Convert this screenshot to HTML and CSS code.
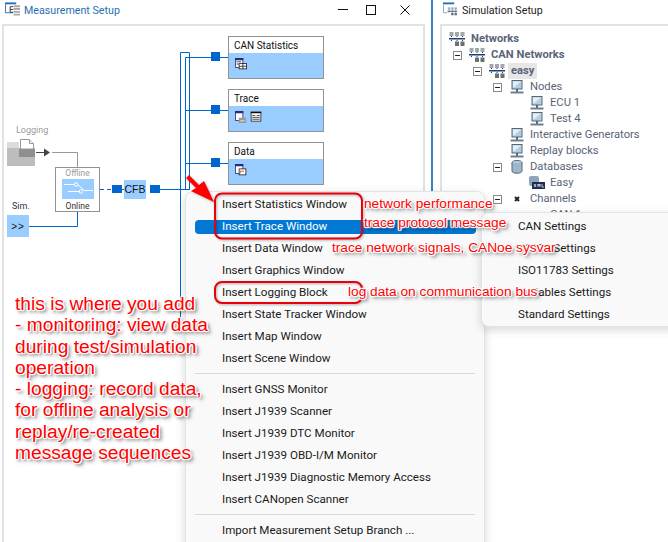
FILE: index.html
```html
<!DOCTYPE html>
<html lang="en">
<head>
<meta charset="utf-8">
<title>Measurement Setup</title>
<link rel="stylesheet" href="styles.css">
</head>
<body>
<svg class="defs" width="0" height="0" aria-hidden="true">
  <symbol id="net" viewBox="0 0 16 14">
    <rect class="nt" x="0.500" y="0" width="4" height="4"/><rect class="nt" x="6" y="0" width="4" height="4"/><rect class="nt" x="11.500" y="0" width="4" height="4"/>
    <path d="M2.500 4v5M8 4v5M13.500 4v5" stroke="#1d3f78" stroke-width="1" stroke-dasharray="1 1" fill="none"/>
    <rect x="0" y="6" width="16" height="1.500" fill="#1d3f78"/>
    <rect class="nb" x="6" y="9.500" width="4" height="4.500"/><rect class="nb" x="11.500" y="9.500" width="4" height="4.500"/>
  </symbol>
  <symbol id="node" viewBox="0 0 16 14">
    <rect x="3" y="0.500" width="10" height="8.500" fill="#b5cfe2" stroke="#56667a"/>
    <path d="M4 1.500 L12 1.500 L4 8z" fill="#e4eff7"/>
    <path d="M8 9v3" stroke="#56667a" stroke-width="2"/>
    <rect x="1.500" y="11.500" width="13" height="2" fill="#6f7f8f"/>
  </symbol>
</svg>
<div class="app">
  <section class="left">
    <header class="title">
      <svg class="title-icon" viewBox="0 0 16 14"><rect x="0" y="0" width="12" height="2" fill="#1f6fc0"/><path d="M0.500 2v9h8" fill="none" stroke="#3a6ea5"/><path d="M5.500 4.500h3M5.500 4.500v6h3M5.500 7.500h3" fill="none" stroke="#333"/><path d="M9 4h7M9 7h7M9 10h7M9 13h7" stroke="#a9a9a9" stroke-width="2"/></svg>
      <span class="title-text active">Measurement Setup</span>
      <div class="win-controls">
        <svg class="ctl" viewBox="0 0 10 10"><path d="M0 4.500h10" stroke="#111" fill="none"/></svg>
        <svg class="ctl" viewBox="0 0 10 10"><rect x="0.500" y="0.500" width="9" height="9" stroke="#111" fill="none"/></svg>
        <svg class="ctl" viewBox="0 0 10 10"><path d="M0.500 0.500l9 9M9.500 0.500l-9 9" stroke="#111" fill="none"/></svg>
      </div>
    </header>
    <div class="canvas">
      <div class="diagram">
        <svg class="wires" width="440" height="542" viewBox="0 0 440 542">
          <path class="wire" d="M180.500 320V52.500H189.500V190M185.500 190V57.500H228M185.500 110.500H228M185.500 163.500H228"/>
          <path class="wire" d="M122 189.500H124M160 189.500H190"/>
          <path class="wire" d="M29 226.500H77.500V212"/>
          <path class="wire dash" d="M100 189.500H112"/>
          <path class="wire-g" d="M52 152.500H77.500V167"/>
          <path d="M36 152.500H44" stroke="#444" fill="none"/><path d="M44 148.500l6 4-6 4z" fill="#444"/>
          <rect class="port" x="211" y="52" width="9" height="9"/>
          <rect class="port" x="211" y="105" width="9" height="9"/>
          <rect class="port" x="211" y="158" width="9" height="9"/>
          <rect class="port" x="112" y="185" width="10" height="8"/>
          <rect class="port" x="150" y="185" width="10" height="8"/>
          <rect x="7" y="142" width="12" height="6" fill="#dcdcdc"/>
          <rect x="7" y="148" width="28" height="18" fill="#bdbdbd"/>
          <rect x="19" y="149" width="16" height="8" fill="#8f8f8f"/>
          <path d="M20.500 139.500h9l4 4v5.500h-13z" fill="#fff" stroke="#999"/>
          <path d="M29.500 139.500v4h4" fill="#eee" stroke="#999"/>
        </svg>

        <div class="block b1"><div class="block-head">CAN Statistics</div><div class="block-body">
          <svg class="blk-icon" viewBox="0 0 16 16"><rect x="0.500" y="0.500" width="10" height="12" fill="#fff" stroke="#1f1f5f"/><rect width="11" height="3" fill="#2b2b7a"/><path d="M2 5h6M2 8h3" stroke="#111"/><rect x="5.500" y="7.500" width="10" height="7" fill="#fff" stroke="#111"/><path d="M5.500 11h10M10.500 7.500v7" stroke="#111"/></svg>
        </div></div>
        <div class="block b2"><div class="block-head">Trace</div><div class="block-body">
          <svg class="blk-icon" viewBox="0 0 16 16"><rect x="0.500" y="0.500" width="10" height="12" fill="#fff" stroke="#1f1f5f"/><rect width="11" height="3" fill="#2b2b7a"/><rect x="5" y="9" width="10" height="7" fill="#9a9a9a"/><path d="M7 12l2 2 2-2 2 2" stroke="#fff" fill="none"/></svg>
          <svg class="blk-icon" viewBox="0 0 16 16"><rect x="1.500" y="1.500" width="13" height="12" fill="#fff" stroke="#111"/><rect x="1" y="1" width="14" height="2" fill="#111"/><path d="M3 6h4M9 6h4M3 8.500h10M3 11h10" stroke="#111"/></svg>
        </div></div>
        <div class="block b3"><div class="block-head">Data</div><div class="block-body">
          <svg class="blk-icon" viewBox="0 0 16 16"><rect x="0.500" y="0.500" width="10" height="12" fill="#fff" stroke="#1f1f5f"/><rect width="11" height="3" fill="#2b2b7a"/><rect x="5.500" y="6.500" width="9" height="8" fill="#fff" stroke="#111"/><path d="M7 9.500h5M7 9.500v3" stroke="#c22" fill="none"/></svg>
        </div></div>

        <span class="lbl gray logging">Logging</span>
        <div class="switch">
          <span class="sw-text gray">Offline</span>
          <div class="sw-body">
            <svg width="32" height="20" viewBox="0 0 32 20"><path d="M2 5.500H13M6 12.500H18M22 11.500H31M16 6l6 5" stroke="#fff" fill="none"/><circle cx="14" cy="5.500" r="1.800" fill="none" stroke="#fff"/><circle cx="19" cy="12.500" r="1.800" fill="none" stroke="#fff"/></svg>
          </div>
          <span class="sw-text dark">Online</span>
        </div>
        <div class="cfb">CFB</div>
        <span class="lbl dark sim">Sim.</span>
        <div class="simbox">&gt;&gt;</div>
      </div>
    </div>
  </section>
  <div class="splitter"></div>
  <section class="right">
    <header class="title">
      <svg class="title-icon" viewBox="0 0 16 14"><rect x="0" y="0" width="12" height="2" fill="#1f6fc0"/><path d="M0.500 2v9h4" fill="none" stroke="#8aa"/><use href="#net" x="4" y="5" width="12" height="9"/></svg>
      <span class="title-text">Simulation Setup</span>
    </header>
    <div class="tree">
      <div class="row l0"><svg class="ti"><use href="#net"/></svg><span class="tl bold">Networks</span></div>
      <div class="row l1"><span class="exp"></span><svg class="ti lightnet"><use href="#net"/></svg><span class="tl bold">CAN Networks</span></div>
      <div class="row l2"><span class="exp"></span><svg class="ti lightnet"><use href="#net"/></svg><span class="tl bold sel">easy</span></div>
      <div class="row l3"><span class="exp"></span><svg class="ti"><use href="#node"/></svg><span class="tl">Nodes</span></div>
      <div class="row l4"><svg class="ti"><use href="#node"/></svg><span class="tl">ECU 1</span></div>
      <div class="row l4"><svg class="ti"><use href="#node"/></svg><span class="tl">Test 4</span></div>
      <div class="row l3 noexp"><svg class="ti"><use href="#node"/></svg><span class="tl">Interactive Generators</span></div>
      <div class="row l3 noexp"><svg class="ti"><use href="#node"/></svg><span class="tl">Replay blocks</span></div>
      <div class="row l3"><span class="exp"></span><svg class="ti" viewBox="0 0 16 14"><ellipse cx="8" cy="3" rx="5" ry="2.500" fill="#b5cfe2" stroke="#56667a"/><path d="M3 3v8c0 3 10 3 10 0V3" fill="#9fb7cc" stroke="#56667a"/></svg><span class="tl">Databases</span></div>
      <div class="row l4"><svg class="ti" viewBox="0 0 16 14"><rect x="0" y="0" width="10" height="10" rx="2" fill="#8fa6ba"/><rect x="3" y="6" width="13" height="7" fill="#1d2f55"/><path d="M5 8l2 3M7 8l-2 3M9 11V8l1 2 1-2v3M13 8v3h2" stroke="#fff" stroke-width="0.700" fill="none"/></svg><span class="tl">Easy</span></div>
      <div class="row l3"><span class="exp"></span><svg class="ti" viewBox="0 0 16 14"><path d="M6 5l4 4M10 5l-4 4" stroke="#222" stroke-width="2"/></svg><span class="tl">Channels</span></div>
      <div class="row l4"><span class="ti"></span><span class="tl">CAN 1</span></div>
    </div>
  </section>

  <nav class="menu main-menu">
    <div class="item">Insert Statistics Window</div>
    <div class="item on">Insert Trace Window</div>
    <div class="item">Insert Data Window</div>
    <div class="item">Insert Graphics Window</div>
    <div class="item">Insert Logging Block</div>
    <div class="item">Insert State Tracker Window</div>
    <div class="item">Insert Map Window</div>
    <div class="item">Insert Scene Window</div>
    <div class="sep"></div>
    <div class="item">Insert GNSS Monitor</div>
    <div class="item">Insert J1939 Scanner</div>
    <div class="item">Insert J1939 DTC Monitor</div>
    <div class="item">Insert J1939 OBD-I/M Monitor</div>
    <div class="item">Insert J1939 Diagnostic Memory Access</div>
    <div class="item">Insert CANopen Scanner</div>
    <div class="sep"></div>
    <div class="item">Import Measurement Setup Branch ...</div>
  </nav>
  <nav class="menu sub-menu">
    <div class="item">CAN Settings</div>
    <div class="item">J1939 Settings</div>
    <div class="item">ISO11783 Settings</div>
    <div class="item">Variables Settings</div>
    <div class="item">Standard Settings</div>
  </nav>

  <svg class="marks" width="668" height="542" viewBox="0 0 668 542">
    <rect class="ring" x="215" y="193.500" width="147" height="45" rx="7"/>
    <rect class="ring" x="215" y="282" width="147" height="21" rx="7"/>
    <path class="arrow" d="M186 178l3-3 10 10 5-4 10 21-23-11 5-3z"/>
  </svg>
  <span class="note n1">network performance</span>
  <span class="note n2">trace protocol message</span>
  <span class="note n3">trace network signals, CANoe sysvar</span>
  <span class="note n4">log data on communication bus</span>
  <p class="note big">this is where you add<br>- monitoring: view data<br>during test/simulation<br>operation<br>- logging: record data,<br>for offline analysis or<br>replay/re-created<br>message sequences</p>
</div>
</body>
</html>
```
FILE: styles.css
```css
* { box-sizing: border-box; }
html, body { margin: 0; padding: 0; background: #fff; }
body { font-family: Roboto, "Open Sans", sans-serif; font-size: 11px; color: #1a1a1a; }
.defs { position: absolute; }
.app { position: relative; display: flex; width: 668px; height: 542px; overflow: hidden; background: #fff; }

.left { width: 431px; display: flex; flex-direction: column; padding-left: 2px; }
.splitter { width: 2px; background: #3b7fc4; }
.right { flex: 1; display: flex; flex-direction: column; padding-left: 7px; }

.title { height: 24px; flex: none; display: flex; align-items: flex-start; gap: 4px; padding-top: 2px; }
.left .title { padding-left: 3px; padding-right: 21px; }
.right .title { padding-left: 3px; }
.title-icon { width: 15px; height: 14px; flex: none; }
.title-text { font-size: 10.700px; line-height: 17px; color: #222; }
.title-text.active { color: #1f6fb2; }
.win-controls { margin-left: auto; display: flex; gap: 18px; padding-top: 3px; }
.ctl { width: 10px; height: 10px; }
.ctl:last-child { margin-left: 6px; }

.canvas { position: relative; width: 423px; flex: 1; border: 2px solid #e2e2e2; border-bottom: 0; }
.diagram { position: absolute; left: -4px; top: -26px; width: 430px; height: 542px; }
.wires { position: absolute; left: 0; top: 0; }
.wire { fill: none; stroke: #0066cc; stroke-width: 1; }
.wire.dash { stroke-dasharray: 4 3; }
.wire-g { fill: none; stroke: #999; stroke-width: 1; }
.port { fill: #0066cc; }

.block { position: absolute; left: 228px; width: 96px; height: 43px; border: 1px solid #929292; display: flex; flex-direction: column; background: #fff; }
.b1 { top: 36px; }
.b2 { top: 89px; }
.b3 { top: 142px; }
.block-head { height: 16px; flex: none; padding: 1px 0 0 5px; font-size: 10px; line-height: 16px; color: #111; }
.block-body { flex: 1; background: #99ccff; display: flex; gap: 3px; padding: 5px 0 0 6px; }
.blk-icon { width: 12px; height: 12px; }

.lbl { position: absolute; font-size: 9px; line-height: 12px; }
.gray { color: #9a9a9a; }
.dark { color: #333; }
.logging { left: 16px; top: 124px; }
.sim { left: 12px; top: 200px; }
.switch { position: absolute; left: 55px; top: 167px; width: 45px; height: 45px; border: 1px solid #929292; display: flex; flex-direction: column; align-items: center; background: #fff; }
.sw-text { font-size: 8.500px; line-height: 11px; height: 11px; }
.sw-body { width: 32px; height: 20px; background: #99ccff; margin-bottom: 2px; line-height: 0; }
.cfb { position: absolute; left: 124px; top: 180px; width: 22px; height: 19px; background: #99ccff; font-family: "Liberation Sans", sans-serif; font-size: 10.500px; line-height: 19px; text-align: center; color: #111; }
.simbox { position: absolute; left: 7px; top: 215px; width: 22px; height: 22px; background: #99ccff; font-family: "Liberation Sans", sans-serif; font-size: 10px; line-height: 23px; text-align: center; letter-spacing: 1px; color: #111; }

.tree { flex: 1; border: 2px solid #e2e2e2; border-right: 0; border-bottom: 0; padding: 5px 0 0 0; }
.row { display: flex; align-items: center; height: 16px; white-space: nowrap; position: relative; font-size: 11.200px; color: #5a6478; }
.l0 { padding-left: 7px; }
.l1 { padding-left: 11px; }
.l2 { padding-left: 31px; }
.l3 { padding-left: 51px; }
.l4 { padding-left: 87px; }
.l3.noexp { padding-left: 67px; }
.exp { width: 9px; height: 9px; border: 1px solid #8a8a8a; margin-right: 7px; position: relative; flex: none; }
.exp::after { content: ""; position: absolute; left: 1px; right: 1px; top: 3px; height: 1px; background: #222; }
.ti { width: 16px; height: 14px; flex: none; margin-right: 5px; }
.l0 .ti, .l1 .ti, .l2 .ti { margin-right: 6px; }
.nt { fill: #a3a8ae; }
.nb { fill: #6e6e6e; }
.lightnet .nt { fill: #a9c2d8; }
.lightnet .nb { fill: #a9c2d8; }
.tl { line-height: 16px; }
.bold { font-weight: 700; }
.sel { background: #e6e6e6; padding: 0 3px; margin-left: -3px; }

.menu { position: absolute; background: #f9f9f9; border: 1px solid #e4e4e4; border-radius: 8px; box-shadow: 0 3px 10px rgba(0, 0, 0, .16); }
.main-menu { left: 185px; top: 191px; width: 300px; height: 362px; padding: 1px 9px; }
.sub-menu { left: 481px; top: 212px; width: 200px; height: 115px; padding: 2px 0 0 36px; }
.item { position: relative; height: 22px; font-size: 11.600px; line-height: 22px; color: #1a1a1a; white-space: nowrap; z-index: 0; }
.main-menu .item { padding-left: 27px; }
.item.on { color: #fff; }
.item.on::before { content: ""; position: absolute; left: 0; right: -1px; top: 5px; height: 14px; border-radius: 4px; background: #0078d4; z-index: -1; }
.sep { height: 1px; margin: 4px 0 4px; background: #d8d8d8; }

.marks { position: absolute; left: 0; top: 0; filter: drop-shadow(1px 1px 1px rgba(0,0,0,.3)); }
.ring { fill: none; stroke: #e8000d; stroke-width: 2; }
.arrow { fill: #ff0000; }
.note { position: absolute; margin: 0; font-family: "Liberation Sans", sans-serif; font-size: 13.700px; line-height: 16px; color: #f00; white-space: nowrap; text-shadow: 1px 0 1px #fff, -1px 0 1px #fff, 0 1px 1px #fff, 0 -1px 1px #fff, 1px 1px 1px #fff, -1px -1px 1px #fff, 1px -1px 1px #fff, -1px 1px 1px #fff, 2px 2px 3px rgba(0,0,0,.55), 3px 3px 4px rgba(0,0,0,.3); }
.n1 { left: 364px; top: 196px; }
.n2 { left: 364px; top: 215px; }
.n3 { left: 332px; top: 240px; }
.n4 { left: 348px; top: 284px; }
.big { left: 15px; top: 293px; font-size: 19.200px; line-height: 21.300px; }
```
